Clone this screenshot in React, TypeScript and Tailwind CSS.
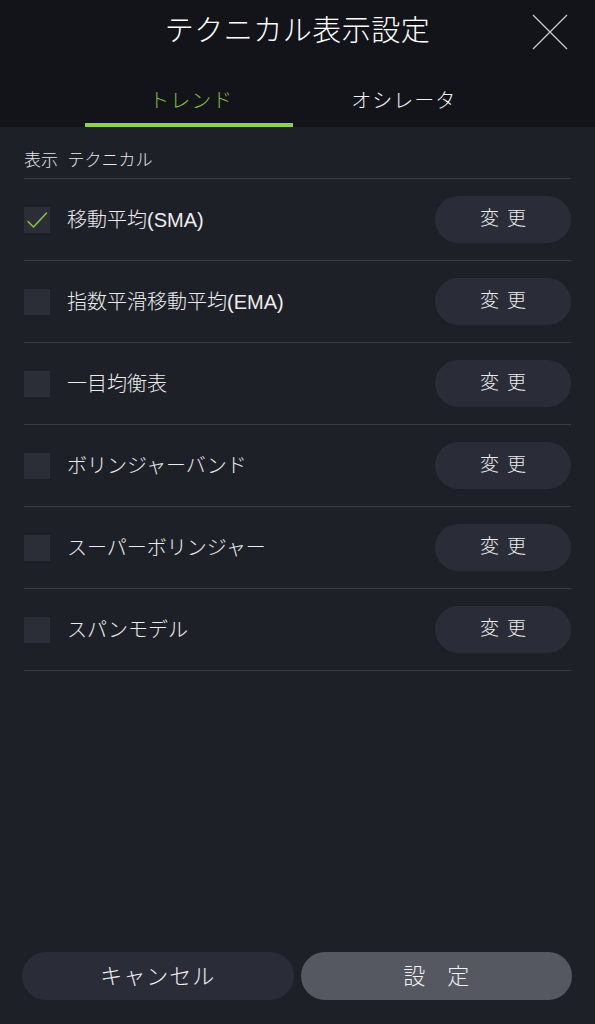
import * as React from "react"

const items = [
	{ label: "移動平均(SMA)", checked: true },
	{ label: "指数平滑移動平均(EMA)", checked: false },
	{ label: "一目均衡表", checked: false },
	{ label: "ボリンジャーバンド", checked: false },
	{ label: "スーパーボリンジャー", checked: false },
	{ label: "スパンモデル", checked: false },
]

const CheckBox = ({ checked }: { checked: boolean }) => (
	<div className="w-[26px] h-[26px] bg-[#2b2d37] flex items-center justify-center shrink-0">
		{checked && (
			<svg width="22" height="18" viewBox="0 0 22 18" fill="none">
				<path d="M2 10.5 L7.5 16 L20.5 2" stroke="#8cc63f" strokeWidth="1.5" strokeLinecap="round" strokeLinejoin="round" />
			</svg>
		)}
	</div>
)

export default function App() {
	const [tab, setTab] = React.useState(0)
	const [state, setState] = React.useState(items.map(i => i.checked))

	return (
		<div
			className="w-full min-h-screen flex flex-col bg-[#1e2028] text-[#ececee] font-light"
			style={{ fontFamily: '"Liberation Sans", "Noto Sans CJK JP", sans-serif' }}
		>
			{/* header */}
			<div className="bg-[#131419]">
				<div className="relative h-[64px] flex items-center justify-center pb-[2px]">
					<h1 className="text-[29px] leading-none tracking-[0.5px] text-white">テクニカル表示設定</h1>
					<button className="absolute right-[27px] top-[14px] w-[36px] h-[36px]">
						<svg width="36" height="36" viewBox="0 0 36 36" fill="none">
							<path d="M1 1 L35 35 M35 1 L1 35" stroke="#c9cacd" strokeWidth="1.3" />
						</svg>
					</button>
				</div>
				<div className="px-[85px] grid grid-cols-2 h-[63px]">
					{["トレンド", "オシレータ"].map((t, i) => (
						<button
							key={t}
							onClick={() => setTab(i)}
							className="relative flex items-center justify-center pt-[10px] text-[20px] tracking-[1px]"
						>
							<span className={tab === i ? "text-[#86b84a]" : "text-[#f2f2f4]"}>{t}</span>
							{tab === i && <span className="absolute left-0 bottom-0 w-[208px] h-[4px] bg-[#8fd14f]" />}
						</button>
					))}
				</div>
			</div>

			{/* list */}
			<div className="flex-1 px-[24px]">
				<div className="pt-[22px] pb-[5px] border-b border-[#3a3c44] text-[17px] leading-[24px] text-[#e6e6e8]">
					表示&nbsp;&nbsp;テクニカル
				</div>
				{items.map((item, i) => (
					<div key={item.label} className="h-[82px] flex items-center border-b border-[#3a3c44]">
						<div onClick={() => setState(s => s.map((v, j) => (j === i ? !v : v)))}>
							<CheckBox checked={state[i]} />
						</div>
						<span className="ml-[17px] text-[20px] text-[#ececee] flex-1">{item.label}</span>
						<button className="w-[136px] h-[47px] rounded-full bg-[#2a2c38] text-[19px] tracking-[8px] pl-[8px] text-[#ececee]">
							変更
						</button>
					</div>
				))}
			</div>

			{/* footer */}
			<div className="grid grid-cols-2 gap-[7px] pl-[22px] pr-[23px] pb-[24px]">
				<button className="h-[48px] rounded-full bg-[#2a2c38] text-[22px] tracking-[1px] text-[#f0f0f2]">
					キャンセル
				</button>
				<button className="h-[48px] rounded-full bg-[#555861] text-[22px] tracking-[22px] pl-[22px] text-[#f0f0f2]">
					設定
				</button>
			</div>
		</div>
	)
}
